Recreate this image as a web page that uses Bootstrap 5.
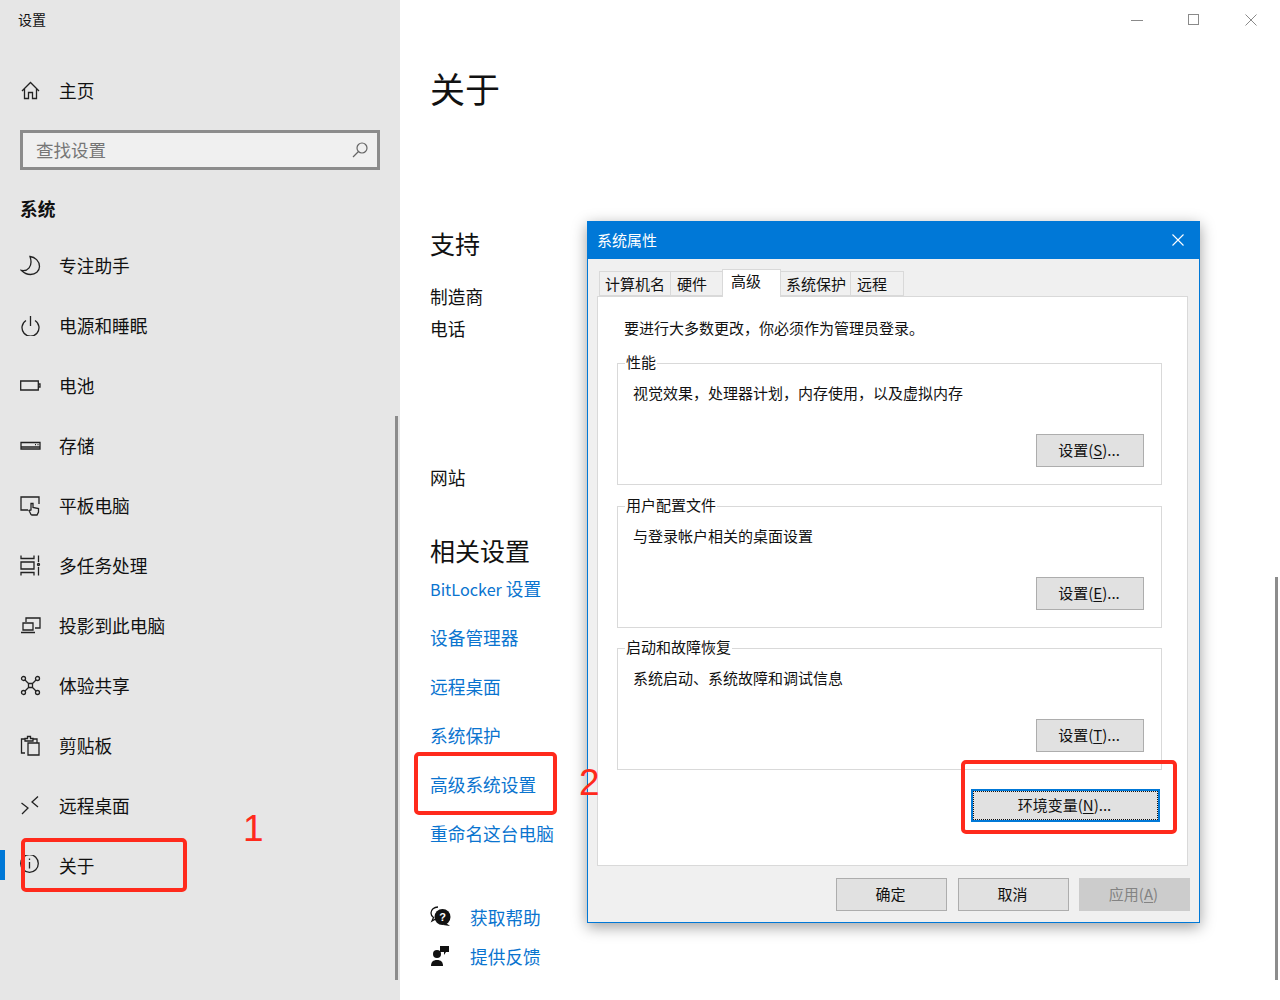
<!DOCTYPE html>
<html lang="zh">
<head>
<meta charset="utf-8">
<title>设置</title>
<link href="https://cdn.jsdelivr.net/npm/bootstrap@5.3.0/dist/css/bootstrap.min.css" rel="stylesheet">
<style>
html,body{height:1000px;overflow:hidden}
body{font-family:"Noto Sans CJK SC","Liberation Sans",sans-serif;color:#111;background:#fff;position:relative;width:1280px}
.shell{height:1000px}
.side{width:400px;background:#e6e6e6;position:relative;flex:none}
.side-title{font-size:14px;line-height:20px;padding:9px 0 0 18px;height:60px}
.nav-row{height:60px;font-size:17.7px;line-height:24px;padding-left:20px;position:relative}
.nav-row svg{width:21px;height:21px;flex:none;margin-right:18px}
.nav-row svg *{fill:none;stroke:#222;stroke-width:1.3}
.nav-home{margin-bottom:10px}
.search-box{margin:0 20px;height:40px;border:3px solid #8c8c8c;background:#f0f0f0;padding:0 8px 0 13px;font-size:17.5px;color:#767676}
.search-box svg{width:18px;height:18px}
.sys-head{font-size:17.7px;font-weight:700;line-height:24px;padding:26px 0 15px 20px}
.sel-bar{position:absolute;left:0;top:15px;width:5px;height:30px;background:#0078d7}
.main-col{flex:1;padding:0 0 0 30px;position:relative}
.win-ctl{position:absolute;top:0;right:1px}
.win-ctl span{width:57px;height:40px;display:flex;align-items:center;justify-content:center}
.page-h{font-size:35px;line-height:46px;padding-top:65px;height:111px;margin-bottom:0;font-weight:400}
.sub-h{font-size:25px;line-height:34px;font-weight:400;margin:0}
.plain{font-size:17.7px;line-height:24px}
.lnk{font-size:17.7px;line-height:24px;color:#0a74cf;text-decoration:none;display:block;height:49px}
.lat{font-size:16.2px}
.scroll-a,.scroll-b{position:absolute;background:#8c8c8c;width:3px;bottom:20px}
.scroll-a{left:395px;top:416px}
.scroll-b{left:1275px;top:577px}
.dlg{position:absolute;left:587px;top:221px;width:613px;height:702px;background:#f0f0f0;border:1px solid #0078d7;box-shadow:0 4px 14px rgba(0,0,0,.38);font-size:15px;line-height:20px}
.dlg-bar{height:37px;background:#0078d7;color:#fff;padding:0 10px 2px 9px}
.dlg-body{padding:11px 11px 0 9px}
.tabs-row{height:26px;align-items:flex-end;padding-left:2px;position:relative;z-index:1}
.tb{height:25px;border:1px solid #d9d9d9;border-left:0;padding:2px 0 0 6px;background:#f0f0f0}
.tb:first-child{border-left:1px solid #d9d9d9;padding-left:5px}
.tb.on{height:28px;background:#fff;border-left:1px solid #d9d9d9;border-bottom:0;padding:1px 0 0 8px;margin-bottom:-1px;margin-left:-1px}
.tb-c{padding-left:5px}
.panel{height:570px;background:#fff;border:1px solid #d9d9d9;padding:21px 25px 0 19px;margin-top:0;position:relative}
.intro{height:45px;padding-left:7px}
.grp{border:1px solid #d9d9d9;height:122px;position:relative;padding:0 17px 0 15px}
.grp-gap{margin-bottom:21px}
.grp-gap2{margin-bottom:20px}
.grp-lab{display:block;width:fit-content;background:#fff;padding:0 1px;margin:-12px 0 0 -8px}
.grp-txt{padding-top:11px}
.grp-btn{position:absolute;right:17px;bottom:17px}
.sysbtn{width:108px;height:33px;background:#e1e1e1;border:1px solid #adadad;color:#111;font-size:15px;line-height:20px;padding:0 2px 2px 0;border-radius:0}
.envbtn{width:189px;border:2px solid #0078d7;outline:1px dotted #111;outline-offset:-3px}
.env-row{margin-top:19px;padding-right:2px}
.foot{height:33px;margin:12px -2px 0 0;gap:11px}
.foot .sysbtn{width:111px}
.foot .dis{background:#ccc;border-color:#ccc;color:#838383;margin-left:-1px}
.anno{position:absolute;border:4px solid #ff2a1c;border-radius:5px}
.anno-n{position:absolute;color:#ff2a1c;font-family:"Liberation Sans",sans-serif;font-size:37px;line-height:40px}
u{text-underline-offset:2px}
</style>
</head>
<body>
<div class="shell d-flex">
  <aside class="side">
    <div class="side-title">设置</div>
    <div class="nav-row nav-home d-flex align-items-center"><svg viewBox="0 0 21 21"><path d="M2 11 10.500 2.500 19 11M4.500 9V18.500H8.500V12.500H12.500V18.500H16.500V9"/></svg><span>主页</span></div>
    <div class="search-box d-flex align-items-center justify-content-between"><span>查找设置</span><svg viewBox="0 0 18 18"><circle cx="11" cy="7" r="5" fill="none" stroke="#666" stroke-width="1.200"/><path d="M7.500 10.500 2 16" stroke="#666" stroke-width="1.200"/></svg></div>
    <div class="sys-head">系统</div>
    <div class="nav-row d-flex align-items-center"><svg viewBox="0 0 21 21"><path d="M10 1.500C15 2 19.500 6 19.500 11.500 19.500 16 15.500 19.500 10.500 19.500 6.500 19.500 3.500 17.500 1.500 15.500 7 16.500 13.500 12 10 1.500Z"/></svg><span>专注助手</span></div>
    <div class="nav-row d-flex align-items-center"><svg viewBox="0 0 21 21"><path d="M6 5.500A8.500 8.500 0 1 0 15 5.500M10.500 1V11"/></svg><span>电源和睡眠</span></div>
    <div class="nav-row d-flex align-items-center"><svg viewBox="0 0 21 21"><path d="M.7 6H18.300V15H.7ZM18.300 9H20V12H18.300"/></svg><span>电池</span></div>
    <div class="nav-row d-flex align-items-center"><svg viewBox="0 0 21 21"><path d="M1 7.500H20V14H1ZM1 12H20M15 9.700H16M17.500 9.700H18.500"/></svg><span>存储</span></div>
    <div class="nav-row d-flex align-items-center"><svg viewBox="0 0 21 21"><path d="M8 15H1V2H19V9M11 19.500 9 15.500 11 15V8.500H13V12.500L18.500 13.500V17L17 20H12Z"/></svg><span>平板电脑</span></div>
    <div class="nav-row d-flex align-items-center"><svg viewBox="0 0 21 21"><path d="M1 .5V3.500H14V.5M1 20.500V17.500H14V20.500M1 7H14V14H1ZM18.500 .5V7M18.500 12V20.500"/><circle cx="18.500" cy="9.500" r="1"/></svg><span>多任务处理</span></div>
    <div class="nav-row d-flex align-items-center"><svg viewBox="0 0 21 21"><path d="M6 7V3H20V13H15M3 8H13V15H3ZM1 17.500H15"/></svg><span>投影到此电脑</span></div>
    <div class="nav-row d-flex align-items-center"><svg viewBox="0 0 21 21"><path d="M5 5 8.500 8.500M16 5 12.500 8.500M5 16 8.500 12.500M16 16 12.500 12.500M8.500 8.500H12.500V12.500H8.500Z"/><circle cx="3.500" cy="3.500" r="2"/><circle cx="17.500" cy="3.500" r="2"/><circle cx="3.500" cy="17.500" r="2"/><circle cx="17.500" cy="17.500" r="2"/></svg><span>体验共享</span></div>
    <div class="nav-row d-flex align-items-center"><svg viewBox="0 0 21 21"><path d="M5 18H1.500V4H5M13 4H17V8M8 8H19V20H8ZM5 6V3.500H7.500V1.500H10.500V3.500H13V6Z"/></svg><span>剪贴板</span></div>
    <div class="nav-row d-flex align-items-center"><svg viewBox="0 0 21 21"><path d="M1.500 8 8 13 2 19M18 1.500 12 7 18 12"/></svg><span>远程桌面</span></div>
    <div class="nav-row d-flex align-items-center"><span class="sel-bar"></span><svg viewBox="0 0 21 21"><circle cx="9.500" cy="8.500" r="8.800"/><path d="M9.500 7V13.500M9.500 3.500V5"/></svg><span>关于</span></div>
  </aside>
  <main class="main-col">
    <h1 class="page-h">关于</h1>
    <h2 class="sub-h" style="margin-top:115px">支持</h2>
    <div class="plain" style="margin-top:24px">制造商</div>
    <div class="plain" style="margin-top:8px">电话</div>
    <div class="plain" style="margin-top:125px">网站</div>
    <h2 class="sub-h" style="margin-top:44px">相关设置</h2>
    <div style="margin-top:9px">
      <a class="lnk" href="#"><span class="lat">BitLocker</span> 设置</a>
      <a class="lnk" href="#">设备管理器</a>
      <a class="lnk" href="#">远程桌面</a>
      <a class="lnk" href="#">系统保护</a>
      <a class="lnk" href="#">高级系统设置</a>
      <a class="lnk" href="#">重命名这台电脑</a>
    </div>
    <div class="d-flex align-items-center" style="margin-top:35px;height:24px">
      <svg width="22" height="22" viewBox="0 0 22 22" style="margin-right:18px"><path d="M8 1C4 1 1 3.500 1 7c0 2 1 3.500 2.500 4.500L2 15l4.500-2.500" fill="none" stroke="#111" stroke-width="1.300"/><circle cx="12.500" cy="11" r="8" fill="#111"/><path d="M16 17l4 3-7-1z" fill="#111"/><text x="12.500" y="15" text-anchor="middle" font-size="11" font-weight="700" fill="#fff" font-family="Liberation Sans">?</text></svg>
      <a class="lnk" style="height:24px" href="#">获取帮助</a>
    </div>
    <div class="d-flex align-items-center" style="margin-top:15px;height:24px">
      <svg width="22" height="22" viewBox="0 0 22 22" style="margin-right:18px"><circle cx="7" cy="9" r="4" fill="#111"/><path d="M1 21c0-4 2-6 6-6s6 2 6 6z" fill="#111"/><path d="M10 1h9v6h-3l-2 3V7h-4z" fill="#111"/></svg>
      <a class="lnk" style="height:24px" href="#">提供反馈</a>
    </div>
    <div class="win-ctl d-flex">
      <span><svg width="12" height="12"><path d="M0 6.500H12" stroke="#8a8a8a"/></svg></span>
      <span><svg width="12" height="12"><rect x=".5" y=".5" width="10" height="10" fill="none" stroke="#8a8a8a"/></svg></span>
      <span><svg width="12" height="12"><path d="M.5 .5 11.500 11.500M11.500 .5 .5 11.500" stroke="#8a8a8a"/></svg></span>
    </div>
  </main>
</div>
<div class="scroll-a"></div>
<div class="scroll-b"></div>

<section class="dlg">
  <div class="dlg-bar d-flex align-items-center justify-content-between">
    <span>系统属性</span>
    <svg width="12" height="12" style="margin-right:5px"><path d="M.5 .5 11.500 11.500M11.500 .5 .5 11.500" stroke="#fff" stroke-width="1.100"/></svg>
  </div>
  <div class="dlg-body">
    <div class="tabs-row d-flex">
      <div class="tb" style="width:72px">计算机名</div>
      <div class="tb" style="width:52px">硬件</div>
      <div class="tb on" style="width:59px">高级</div>
      <div class="tb tb-c" style="width:70px">系统保护</div>
      <div class="tb" style="width:53px">远程</div>
    </div>
    <div class="panel">
      <div class="intro">要进行大多数更改，你必须作为管理员登录。</div>
      <div class="grp grp-gap">
        <span class="grp-lab">性能</span>
        <div class="grp-txt">视觉效果，处理器计划，内存使用，以及虚拟内存</div>
        <div class="grp-btn"><button class="btn sysbtn">设置(<u>S</u>)...</button></div>
      </div>
      <div class="grp grp-gap2">
        <span class="grp-lab">用户配置文件</span>
        <div class="grp-txt">与登录帐户相关的桌面设置</div>
        <div class="grp-btn"><button class="btn sysbtn">设置(<u>E</u>)...</button></div>
      </div>
      <div class="grp">
        <span class="grp-lab">启动和故障恢复</span>
        <div class="grp-txt">系统启动、系统故障和调试信息</div>
        <div class="grp-btn"><button class="btn sysbtn">设置(<u>T</u>)...</button></div>
      </div>
      <div class="env-row d-flex justify-content-end">
        <button class="btn sysbtn envbtn">环境变量(<u>N</u>)...</button>
      </div>
    </div>
    <div class="foot d-flex justify-content-end">
      <button class="btn sysbtn">确定</button>
      <button class="btn sysbtn">取消</button>
      <button class="btn sysbtn dis">应用(<u>A</u>)</button>
    </div>
  </div>
</section>

<div class="anno" style="left:21px;top:838px;width:166px;height:54px"></div>
<div class="anno" style="left:414px;top:752px;width:143px;height:63px"></div>
<div class="anno" style="left:961px;top:760px;width:216px;height:74px"></div>
<div class="anno-n" style="left:243px;top:809px">1</div>
<div class="anno-n" style="left:579px;top:763px">2</div>
</body>
</html>
